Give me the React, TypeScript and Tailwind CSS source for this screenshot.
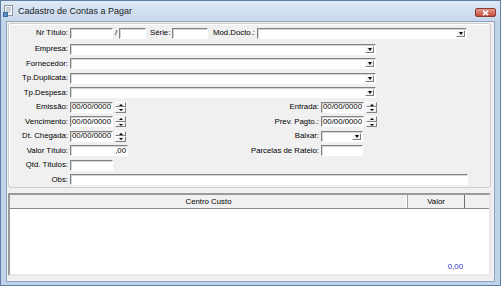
const Edit = ({ w, right, children }: { w: string; right?: boolean; children?: React.ReactNode }) => (
  <div
    className={`${w} h-[11px] bg-white border border-t-[#828282] border-l-[#828282] border-b-white border-r-white shadow-[inset_1px_1px_0_#d4d4d4] flex items-center px-[1px] leading-none ${right ? "justify-end" : ""}`}
  >
    {children}
  </div>
);

const Combo = ({ w }: { w: string }) => (
  <div
    className={`${w} h-[11px] bg-white border border-t-[#828282] border-l-[#828282] border-b-white border-r-white shadow-[inset_1px_1px_0_#d4d4d4] flex justify-end p-[1px]`}
  >
    <div className="w-[9px] bg-[#f0f0f0] border border-t-white border-l-white border-b-[#808080] border-r-[#808080] flex items-center justify-center">
      <div className="w-0 h-0 border-l-[2.5px] border-r-[2.5px] border-t-[3px] border-l-transparent border-r-transparent border-t-black" />
    </div>
  </div>
);

const Spin = () => (
  <div className="ml-[2px] w-[11px] h-[11px] flex flex-col">
    <div className="flex-1 bg-[#f0f0f0] border border-t-white border-l-white border-b-[#808080] border-r-[#808080] flex items-center justify-center">
      <div className="w-0 h-0 border-l-[2px] border-r-[2px] border-b-[2px] border-l-transparent border-r-transparent border-b-black" />
    </div>
    <div className="flex-1 bg-[#f0f0f0] border border-t-white border-l-white border-b-[#808080] border-r-[#808080] flex items-center justify-center">
      <div className="w-0 h-0 border-l-[2px] border-r-[2px] border-t-[2px] border-l-transparent border-r-transparent border-t-black" />
    </div>
  </div>
);

const DateEdit = () => (
  <div className="flex items-center">
    <Edit w="w-[43px]">00/00/0000</Edit>
    <Spin />
  </div>
);

const Row = ({ label, children }: { label: string; children?: React.ReactNode }) => (
  <div className="h-[14.5px] flex items-center">
    <div className="w-[59px] text-right whitespace-nowrap">{label}</div>
    <div className="ml-[2px] flex items-center">{children}</div>
  </div>
);

const Split = ({ label, left, right }: { label: string; left: React.ReactNode; right: React.ReactNode }) => (
  <>
    <div className="w-[58px] flex items-center">{left}</div>
    <div className="w-[191px] text-right whitespace-nowrap">{label}</div>
    <div className="ml-[2px] flex items-center">{right}</div>
  </>
);

export default function App() {
  return (
    <div className="w-[501px] h-[286px] bg-[#c1d3e9] border border-[#5f7fa5] flex flex-col font-['Liberation_Sans',Arial,sans-serif] text-[7.8px] text-black overflow-hidden">
      {/* title bar */}
      <div className="h-[20px] shrink-0 flex items-center bg-linear-to-b from-[#dfe9f6] to-[#c6d7ec] pl-[2px] pr-[4px]">
        <svg width="12" height="12" viewBox="0 0 12 12" className="shrink-0">
          <rect x="1.5" y="0.5" width="8" height="10" fill="#f4f6f8" stroke="#8a96a3" />
          <line x1="3" y1="3" x2="8" y2="3" stroke="#9aa5b0" />
          <line x1="3" y1="5" x2="8" y2="5" stroke="#9aa5b0" />
          <line x1="3" y1="7" x2="7" y2="7" stroke="#9aa5b0" />
          <rect x="0.5" y="7.5" width="4" height="4" fill="#5b8fc7" stroke="#3d6a9c" />
        </svg>
        <span className="ml-[3px] text-[9px] text-[#1c1c1c] leading-none">Cadastro de Contas a Pagar</span>
        <div className="ml-auto mt-[3px] w-[21px] h-[9px] rounded-[2px] border border-[#8c3b31] bg-linear-to-b from-[#e39a8d] to-[#c4493a] flex items-center justify-center">
          <svg width="7" height="6" viewBox="0 0 7 6">
            <path d="M1 0.8 L6 5.2 M6 0.8 L1 5.2" stroke="#fff" strokeWidth="1.6" />
          </svg>
        </div>
      </div>

      {/* client area */}
      <div className="flex-1 mx-[5px] mb-[3px] bg-[#f0f0f0] border border-[#8fa4bd] flex flex-col pl-[1px] pt-[1px]">
        {/* group box */}
        <div className="w-[483px] h-[165px] border border-[#cdcdcd] rounded-[3px] shadow-[inset_1px_1px_0_#ffffff] flex flex-col">
          <div className="mt-[3px] h-[12px] flex items-center">
            <div className="w-[59px] text-right">Nr Título:</div>
            <div className="ml-[2px]"><Edit w="w-[43px]" /></div>
            <div className="w-[6px] text-center">/</div>
            <Edit w="w-[27px]" />
            <div className="ml-[4px] w-[20px]">Série:</div>
            <div className="ml-[2px]"><Edit w="w-[36px]" /></div>
            <div className="ml-[5px] w-[42px] text-right whitespace-nowrap">Mod.Docto.:</div>
            <div className="ml-[2px]"><Combo w="w-[210px]" /></div>
          </div>
          <div className="mt-[3px] flex flex-col">
            <Row label="Empresa:"><Combo w="w-[306px]" /></Row>
            <Row label="Fornecedor:"><Combo w="w-[306px]" /></Row>
            <Row label="Tp.Duplicata:"><Combo w="w-[306px]" /></Row>
            <Row label="Tp.Despesa:"><Combo w="w-[306px]" /></Row>
            <Row label="Emissão:">
              <Split label="Entrada:" left={<DateEdit />} right={<DateEdit />} />
            </Row>
            <Row label="Vencimento:">
              <Split label="Prev. Pagto.:" left={<DateEdit />} right={<DateEdit />} />
            </Row>
            <Row label="Dt. Chegada:">
              <Split label="Baixar:" left={<DateEdit />} right={<Combo w="w-[42px]" />} />
            </Row>
            <Row label="Valor Título:">
              <Split
                label="Parcelas de Rateio:"
                left={<Edit w="w-[58px]" right>,00</Edit>}
                right={<Edit w="w-[42px]" />}
              />
            </Row>
            <Row label="Qtd. Títulos:"><Edit w="w-[43px]" /></Row>
            <Row label="Obs:"><Edit w="w-[398px]" /></Row>
          </div>
        </div>

        {/* grid */}
        <div className="mt-[5px] w-[483px] h-[83px] border-2 border-t-[#9a9a9a] border-l-[#9a9a9a] border-b-[#e8e8e8] border-r-[#e8e8e8] flex flex-col bg-white">
          <div className="h-[14px] shrink-0 flex bg-[#f0f0f0] border-b border-[#8a8a8a]">
            <div className="w-[398px] flex items-center justify-center border-r border-[#a0a0a0] shadow-[inset_-1px_0_0_#ffffff]">Centro Custo</div>
            <div className="w-[57px] flex items-center justify-center border-r border-[#707070]">Valor</div>
            <div className="flex-1" />
          </div>
          <div className="flex-1 flex">
            <div className="w-[398px]" />
            <div className="w-[57px] flex flex-col justify-end items-end pr-[2px] pb-[1px]">
              <span className="text-[#2e32c8]">0,00</span>
            </div>
          </div>
        </div>
      </div>
    </div>
  );
}
